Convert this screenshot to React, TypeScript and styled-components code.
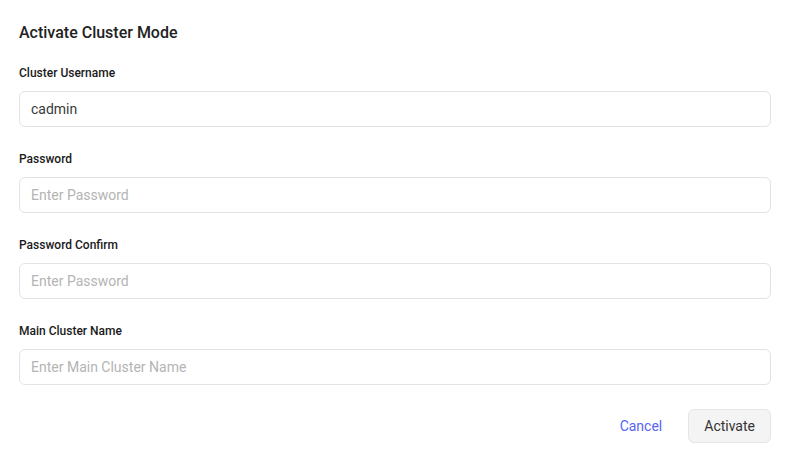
import React, { useState } from 'react'
import styled, { createGlobalStyle } from 'styled-components'

const GlobalStyle = createGlobalStyle`
  body {
    margin: 0;
    background: #ffffff;
    font-family: Roboto, 'Liberation Sans', sans-serif;
    color: #222222;
  }
`

const Panel = styled.form`
  display: flex;
  flex-direction: column;
  padding: 21px 18px 19px 19px;
`

const Title = styled.h2`
  margin: 0 0 20px 0;
  font-size: 16px;
  line-height: 24px;
  font-weight: 500;
  color: #222222;
`

const FieldList = styled.div`
  display: flex;
  flex-direction: column;
  gap: 24px;
`

const Field = styled.label`
  display: flex;
  flex-direction: column;
  gap: 10px;
`

const Label = styled.span`
  font-size: 12px;
  line-height: 16px;
  font-weight: 500;
  color: #1a1a1a;
`

const Input = styled.input`
  box-sizing: border-box;
  width: 100%;
  height: 36px;
  padding: 0 11px;
  border: 1px solid #e3e3e3;
  border-radius: 6px;
  font-family: Roboto, 'Liberation Sans', sans-serif;
  font-size: 14px;
  color: #3a3a3a;
  background: #ffffff;
  outline: none;

  &::placeholder {
    color: #b4b4b4;
  }
`

const Actions = styled.div`
  display: flex;
  justify-content: flex-end;
  align-items: center;
  gap: 26px;
  margin-top: 24px;
`

const LinkButton = styled.button`
  border: none;
  background: none;
  padding: 0;
  font-family: Roboto, 'Liberation Sans', sans-serif;
  font-size: 14px;
  color: #5765f2;
  cursor: pointer;
`

const SecondaryButton = styled.button`
  box-sizing: border-box;
  height: 34px;
  padding: 0 15px;
  border: 1px solid #e5e5e5;
  border-radius: 6px;
  background: #f4f4f4;
  font-family: Roboto, 'Liberation Sans', sans-serif;
  font-size: 14px;
  color: #333333;
  cursor: pointer;
`

const fields = [
  { name: 'username', label: 'Cluster Username', placeholder: '', type: 'text' },
  { name: 'password', label: 'Password', placeholder: 'Enter Password', type: 'password' },
  { name: 'confirm', label: 'Password Confirm', placeholder: 'Enter Password', type: 'password' },
  { name: 'cluster', label: 'Main Cluster Name', placeholder: 'Enter Main Cluster Name', type: 'text' },
]

export default function App() {
  const [values, setValues] = useState<Record<string, string>>({ username: 'cadmin' })

  return (
    <>
      <GlobalStyle />
      <Panel onSubmit={(e) => e.preventDefault()}>
        <Title>Activate Cluster Mode</Title>
        <FieldList>
          {fields.map((f) => (
            <Field key={f.name}>
              <Label>{f.label}</Label>
              <Input
                type={f.type}
                placeholder={f.placeholder}
                value={values[f.name] || ''}
                onChange={(e) => setValues({ ...values, [f.name]: e.target.value })}
              />
            </Field>
          ))}
        </FieldList>
        <Actions>
          <LinkButton type="button">Cancel</LinkButton>
          <SecondaryButton type="submit">Activate</SecondaryButton>
        </Actions>
      </Panel>
    </>
  )
}
